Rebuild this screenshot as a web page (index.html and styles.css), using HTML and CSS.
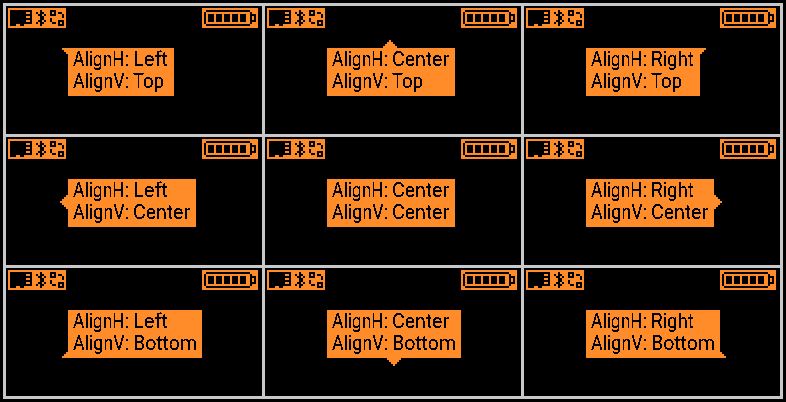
FILE: index.html
```
<!DOCTYPE html>
<html lang="en">
<head>
<meta charset="utf-8">
<title>Alignment</title>
<link rel="stylesheet" href="styles.css">
</head>
<body>
<svg class="defs" aria-hidden="true">
  <defs>
    <symbol id="status" viewBox="0 0 29 10">
      <path class="fg" d="M0 0h29v10H0z"/>
      <path d="M1 1h11v7H8v1H6V8H4v1H1z"/>
      <path class="fg" d="M9 2h2v1H9zM9 4h2v1H9zM9 6h2v1H9z"/>
      <path d="M16 1h1v1h1v1h-1v1h1v2h-1v1h1v1h-1v1h-1V7h-1V6h1V4h-1V3h1zM14 2h1v1h-1zM18 3h1v1h-1zM18 6h1v1h-1zM14 7h1v1h-1z"/>
      <path fill-rule="evenodd" d="M21 1h3v3h-3zM22 2v1h1V2zM25 6h3v3h-3zM26 7v1h1V7zM25 2h2v1h-2zM27 3h1v2h-1zM21 5h1v2h-1zM22 7h2v1h-2z"/>
    </symbol>
    <symbol id="battery" viewBox="0 0 28 10">
      <path class="fg" d="M0 0h28v10H0z"/>
      <path d="M2 1h22v1H2zM1 2h1v6H1zM2 8h22v1H2zM24 2h1v6h-1zM25 3h2v4h-2V6h1V4h-1zM3 3h3v4H3zM7 3h3v4H7zM11 3h3v4h-3zM15 3h3v4h-3zM19 3h3v4h-3z"/>
    </symbol>
    <symbol id="corner" viewBox="0 0 3 3"><path class="fg" d="M0 0h3v3H2V2H1V1H0z"/></symbol>
    <symbol id="arrow" viewBox="0 0 7 4"><path class="fg" d="M3 0h1v1h1v1h1v1h1v1H0V3h1V2h1V1h1z"/></symbol>
    <filter id="crisp" x="0" y="0" width="1" height="1"><feComponentTransfer><feFuncA type="discrete" tableValues="0 0 1 1 1"/></feComponentTransfer></filter>
  </defs>
</svg>
<main class="grid" id="grid"></main>
<script src="script.js"></script>
</body>
</html>
```
FILE: styles.css
```
body {
  margin: 0;
  background: #000;
}

.defs {
  position: absolute;
  width: 0;
  height: 0;
}

.fg {
  fill: #ff8b29;
}

.grid {
  display: grid;
  grid-template: repeat(3, 128px) / repeat(3, 256px);
  gap: 3px;
  width: max-content;
  margin: 3px;
  padding: 3px;
  background: #c8c8c8;
}

.screen {
  background: #000;
}

.bar {
  display: flex;
  justify-content: space-between;
  padding: 2px 4px 0 2px;
}

.bar svg {
  display: block;
  height: 20px;
  shape-rendering: crispEdges;
}

.bar .status { width: 58px; }
.bar .battery { width: 56px; }

.bubble {
  position: relative;
  width: 128px;
  height: 48px;
  margin: 20px 0 0 62px;
  background: #ff8b29;
}

.left-top { width: 106px; }
.right-top { width: 114px; }
.left-bottom,
.center-bottom,
.right-bottom { width: 134px; }

.label {
  display: block;
  width: 100%;
  height: 48px;
  font: 400 19.7px Roboto, sans-serif;
  filter: url(#crisp);
}

.tail {
  position: absolute;
  shape-rendering: crispEdges;
}

.corner { width: 6px; height: 6px; }
.arrow { width: 14px; height: 8px; }
.left-top .tail { left: -6px; top: 0; }
.right-top .tail { right: -6px; top: 0; transform: scaleX(-1); }
.left-bottom .tail { left: -6px; bottom: 0; transform: scaleY(-1); }
.right-bottom .tail { right: -6px; bottom: 0; transform: scale(-1); }
.center-top .tail { left: 56px; top: -8px; }
.center-bottom .tail { left: 60px; bottom: -8px; transform: scaleY(-1); }
.left-center .tail { left: -11px; top: 19px; transform: rotate(-90deg); }
.right-center .tail { right: -11px; top: 19px; transform: rotate(90deg); }
```
FILE: script.js
```
const widths = { Left: 35, Center: 57, Right: 43, Top: 31, Bottom: 64 };

const word = (text, x, y, length) =>
  `<text x="${x}" y="${y}" textLength="${length}" lengthAdjust="spacingAndGlyphs">${text}</text>`;

const screen = (h, v) => {
  const centered = h === "Center" && v === "Center";
  const shape = h !== "Center" && v !== "Center" ? "corner" : "arrow";
  const tail = centered ? "" : `<svg class="tail ${shape}"><use href="#${shape}"/></svg>`;
  return `<section class="screen">
    <div class="bar">
      <svg class="status"><use href="#status"/></svg>
      <svg class="battery"><use href="#battery"/></svg>
    </div>
    <div class="bubble ${h.toLowerCase()}-${v.toLowerCase()}">
      <svg class="label">
        ${word("AlignH:", 5, 18, 56)}${word(h, 65, 18, widths[h])}
        ${word("AlignV:", 5, 40, 56)}${word(v, 65, 40, widths[v])}
      </svg>${tail}
    </div>
  </section>`;
};

document.getElementById("grid").innerHTML = ["Top", "Center", "Bottom"]
  .flatMap(v => ["Left", "Center", "Right"].map(h => screen(h, v)))
  .join("");
```
